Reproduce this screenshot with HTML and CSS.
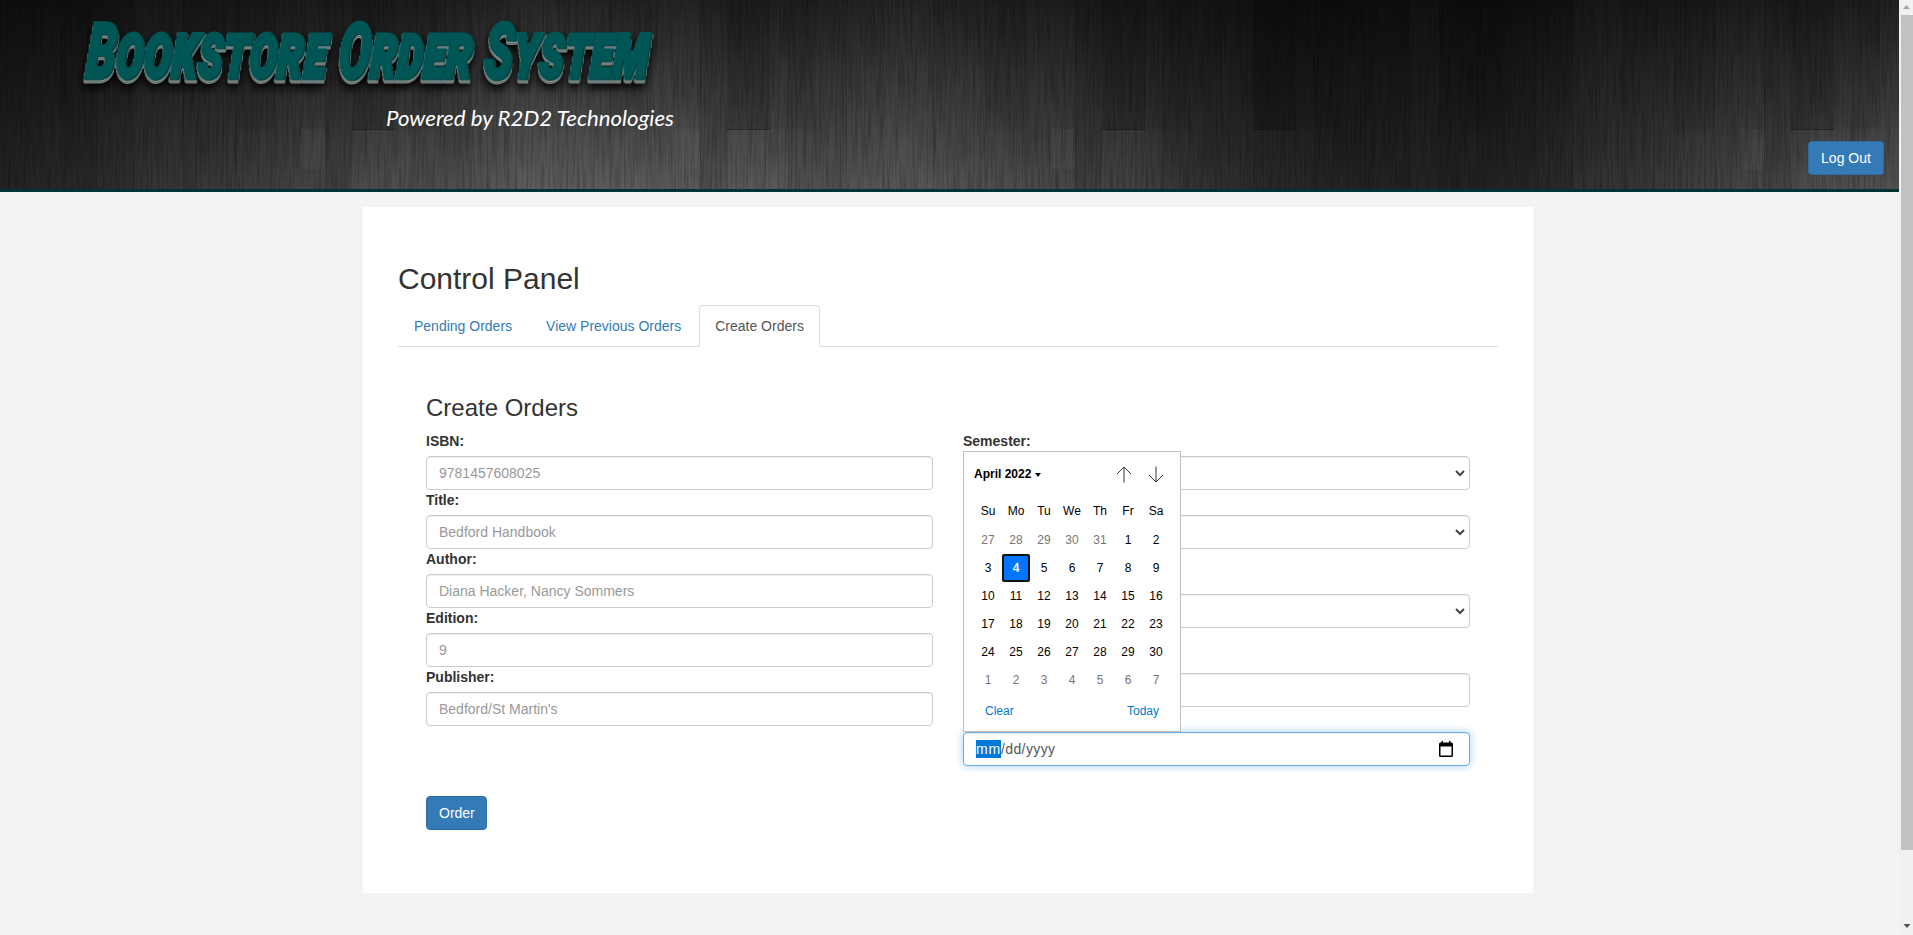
FILE: index.html
```html
<!DOCTYPE html>
<html lang="en">
<head>
<meta charset="utf-8">
<title>Bookstore Order System</title>
<link rel="stylesheet" href="styles.css">
</head>
<body>
<div class="window">
<div class="page">
  <header class="banner">
    <svg class="wood" width="1899" height="189" aria-hidden="true">
      <defs>
        <filter id="grain" x="0" y="0" width="100%" height="100%">
          <feTurbulence type="fractalNoise" baseFrequency="0.45 0.018" numOctaves="3" seed="4"/>
          <feColorMatrix values="0 0 0 0 0  0 0 0 0 0  0 0 0 0 0  1.6 0 0 0 -0.62"/>
        </filter>
        <pattern id="planks" width="375" height="189" patternUnits="userSpaceOnUse">
          <rect x="38" width="58" height="189" fill="#000" opacity=".06"/>
          <rect x="133" width="50" height="189" fill="#fff" opacity=".015"/>
          <rect x="235" width="40" height="129" fill="#000" opacity=".07"/>
          <rect x="301" y="129" width="24" height="40" fill="#fff" opacity=".03"/>
          <rect x="325" width="27" height="189" fill="#000" opacity=".1"/>
          <rect x="352" width="23" height="129" fill="#000" opacity=".2"/>
          <rect width="20" height="129" fill="#000" opacity=".2"/>
          <rect x="20" width="46" height="129" fill="#000" opacity=".08"/>
          <path d="M352 129.500h23M0 129.500h20" stroke="#000" opacity=".4"/>
          <path d="M38.500 0v189M96.500 0v189M133.500 0v189M183.500 0v189M235.500 0v189M275.500 0v189M325.500 0v189" stroke="#000" opacity=".14"/>
        </pattern>
      </defs>
      <rect x="60" width="1193" height="189" fill="url(#planks)"/>
      <rect x="352" width="186" height="189" fill="url(#planks)" transform="translate(901 0)"/>
      <rect x="20" width="440" height="189" fill="url(#planks)" transform="translate(1439 0)"/>
      <rect width="1899" height="189" filter="url(#grain)" opacity=".32"/>
    </svg>
    <svg class="brand" width="720" height="150" role="img" aria-label="Bookstore Order System">
      <text class="brand-title" x="90" y="78" textLength="563" lengthAdjust="spacingAndGlyphs" transform="skewX(-4)">Bookstore Order System</text>
      <text class="brand-tag" x="386" y="126" textLength="288" lengthAdjust="spacingAndGlyphs">Powered by R2D2 Technologies</text>
    </svg>
    <button class="btn logout">Log Out</button>
  </header>

  <main class="panel">
    <h2>Control Panel</h2>
    <nav class="tabs">
      <a class="tab">Pending Orders</a>
      <a class="tab">View Previous Orders</a>
      <a class="tab active">Create Orders</a>
    </nav>
    <section class="orders">
      <h3>Create Orders</h3>
      <div class="columns">
        <div class="column">
          <label>ISBN:</label><input class="field" placeholder="9781457608025">
          <label>Title:</label><input class="field" placeholder="Bedford Handbook">
          <label>Author:</label><input class="field" placeholder="Diana Hacker, Nancy Sommers">
          <label>Edition:</label><input class="field" placeholder="9">
          <label>Publisher:</label><input class="field" placeholder="Bedford/St Martin's">
        </div>
        <div class="column">
          <label>Semester:</label>
          <div class="field select"><svg width="10" height="7"><path d="M1 1l4 4 4-4"/></svg></div>
          <div class="field select"><svg width="10" height="7"><path d="M1 1l4 4 4-4"/></svg></div>
          <div class="field select spaced"><svg width="10" height="7"><path d="M1 1l4 4 4-4"/></svg></div>
          <div class="field select spaced"></div>
          <div class="field date">
            <span><span class="picked">mm</span>/dd/yyyy</span>
            <svg width="14" height="16"><path fill-rule="evenodd" d="M2.500 0h1.500v1.500h6V0h1.500v1.500H12.500Q14 1.500 14 3v11.500Q14 16 12.500 16h-11Q0 16 0 14.500V3Q0 1.500 1.500 1.500h1zM1.500 5.500v9h11v-9z"/></svg>
          </div>
          <div class="calendar">
            <div class="cal-head">
              <b>April 2022</b><i class="caret"></i>
              <svg class="up" width="16" height="17"><path d="M8 16.500V1M1 8l7-7 7 7"/></svg>
              <svg width="16" height="17"><path d="M8 .5V16M1 9l7 7 7-7"/></svg>
            </div>
            <div class="cal-grid names"><span>Su</span><span>Mo</span><span>Tu</span><span>We</span><span>Th</span><span>Fr</span><span>Sa</span></div>
            <div class="cal-grid">
              <span class="dim">27</span><span class="dim">28</span><span class="dim">29</span><span class="dim">30</span><span class="dim">31</span><span>1</span><span>2</span>
              <span>3</span><span class="today">4</span><span>5</span><span>6</span><span>7</span><span>8</span><span>9</span>
              <span>10</span><span>11</span><span>12</span><span>13</span><span>14</span><span>15</span><span>16</span>
              <span>17</span><span>18</span><span>19</span><span>20</span><span>21</span><span>22</span><span>23</span>
              <span>24</span><span>25</span><span>26</span><span>27</span><span>28</span><span>29</span><span>30</span>
              <span class="dim">1</span><span class="dim">2</span><span class="dim">3</span><span class="dim">4</span><span class="dim">5</span><span class="dim">6</span><span class="dim">7</span>
            </div>
            <div class="cal-foot"><span>Clear</span><span>Today</span></div>
          </div>
        </div>
      </div>
      <button class="btn order">Order</button>
    </section>
  </main>
</div>
<div class="scrollbar">
  <svg width="14" height="15"><path fill="#a3a3a3" d="M4 9h7L7.500 5z"/></svg>
  <div class="thumb"></div>
  <svg class="down" width="14" height="15"><path fill="#505050" d="M4.500 4h7L8 8z"/></svg>
</div>
</div>
</body>
</html>
```

FILE: styles.css
```css
* { box-sizing: border-box; }
body {
  margin: 0;
  overflow: hidden;
  background: #f1f3f5;
  color: #333;
  font: 14px/20px "Liberation Sans", Arial, sans-serif;
}
.window { display: flex; height: 935px; }
.page { width: 1899px; flex: none; }

.banner {
  position: relative;
  height: 192px;
  border-bottom: 3px solid #033;
  background:
    linear-gradient(#0000009c, #0000 100%),
    linear-gradient(90deg, #232323 0, #333 170px, #505050 400px, #5c5c5c 580px, #575757 800px, #525252 960px, #424242 1130px, #2a2a2a 1260px, #212121 1440px, #2b2b2b 1560px, #404040 1700px, #585858 1899px);
}
.wood, .brand { position: absolute; left: 0; top: 0; }
.brand { overflow: visible; }
.brand-title {
  font: italic small-caps 900 78px Roboto, "Liberation Sans", sans-serif;
  word-spacing: -1px;
  fill: #055;
  stroke: #055;
  stroke-width: 3px;
  filter: drop-shadow(1px 1px 0 #033) drop-shadow(0 1px 0 #9aa) drop-shadow(0 1px 0 #455) drop-shadow(0 1px 0 #aaa) drop-shadow(0 5px 5px #000);
}
.brand-tag { font: italic 400 21px Lato, sans-serif; fill: #fff; }
.btn {
  height: 34px;
  padding: 6px 12px;
  border: 1px solid #2e6da4;
  border-radius: 4px;
  background: #337ab7;
  color: #fff;
  font: inherit;
}
.logout { position: absolute; right: 15px; bottom: 14px; width: 76px; }

.panel {
  width: 1170px;
  height: 686px;
  margin: 15px 0 0 363px;
  padding: 55px 35px 0;
  background: #fff;
}
h2, h3 { margin: 0; font-weight: 500; line-height: 1.1; }
h2 { font-size: 30px; }
h3 { font-size: 24px; margin-bottom: 10px; }
.tabs { display: flex; gap: 2px; height: 42px; margin-top: 10px; border-bottom: 1px solid #ddd; }
.tab {
  height: 42px;
  padding: 10px 15px;
  border: 1px solid transparent;
  border-radius: 4px 4px 0 0;
  color: #337ab7;
}
.tab.active { border-color: #ddd #ddd #fff; background: #fff; color: #555; }

.orders { padding: 48px 28px 0; }
.columns { display: grid; grid-template-columns: 507px 507px; gap: 30px; }
.column { position: relative; display: flex; flex-direction: column; }
label { height: 20px; margin-bottom: 5px; font-weight: 700; }
.field {
  width: 100%;
  height: 34px;
  padding: 6px 12px;
  border: 1px solid #ccc;
  border-radius: 4px;
  background: #fff;
  color: #555;
  font: inherit;
  box-shadow: inset 0 1px 1px rgba(0, 0, 0, .075);
}
.field::placeholder { color: #999; opacity: 1; }
.select { display: flex; align-items: center; justify-content: flex-end; padding-right: 4px; }
.select + .select { margin-top: 25px; }
.select + .spaced { margin-top: 45px; }
.select path { fill: none; stroke: #444; stroke-width: 2; }
.date {
  display: flex;
  align-items: center;
  justify-content: space-between;
  margin-top: 25px;
  padding: 0 16px 0 12px;
  border-color: #66afe9;
  box-shadow: inset 0 1px 1px rgba(0, 0, 0, .075), 0 0 8px rgba(102, 175, 233, .6);
}
.date > span { letter-spacing: .4px; }
.picked { display: inline-block; height: 18px; line-height: 18px; background: #0078d7; color: #fff; letter-spacing: .8px; }

.calendar {
  position: absolute;
  left: 0;
  top: 20px;
  width: 218px;
  height: 281px;
  padding: 0 10px;
  border: 1px solid #bfbfbf;
  background: #fff;
  color: #000;
  font-size: 12px;
}
.cal-head { display: flex; align-items: center; height: 45px; }
.cal-head b { margin-top: -1px; }
.caret { margin-left: 4px; border: 3.500px solid transparent; border-top: 4px solid #000; border-bottom: 0; }
.cal-head svg { fill: none; stroke: #333; margin-right: 6px; }
.cal-head .up { margin: 0 16px 0 auto; }
.cal-grid { display: grid; grid-template-columns: repeat(7, 28px); grid-auto-rows: 28px; line-height: 28px; text-align: center; }
.names { height: 29px; }
.dim { color: #767676; }
.today { border: 2px solid #101010; border-radius: 2px; background: #0075ff; color: #fff; font-weight: 700; line-height: 24px; }
.cal-foot { display: flex; justify-content: space-between; padding: 7px 11px 0 11px; color: #0078d7; }
.order { margin-top: 30px; width: 61px; }

.scrollbar { display: flex; flex-direction: column; flex: none; width: 14px; background: #f1f1f1; }
.thumb { height: 835px; margin-left: 2px; background: #c1c1c1; }
.down { margin-top: auto; }
```
